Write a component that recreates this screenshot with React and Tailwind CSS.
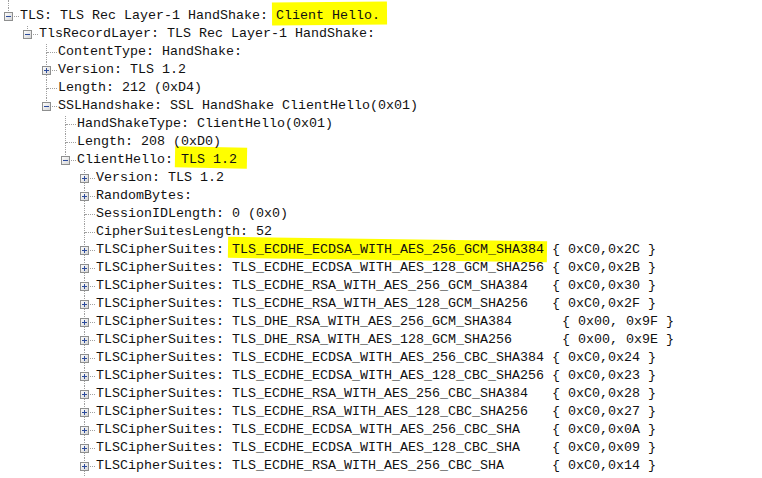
import React from "react";

const suites = [
  ["TLS_ECDHE_ECDSA_WITH_AES_256_GCM_SHA384", "{ 0xC0,0x2C }", true],
  ["TLS_ECDHE_ECDSA_WITH_AES_128_GCM_SHA256", "{ 0xC0,0x2B }"],
  ["TLS_ECDHE_RSA_WITH_AES_256_GCM_SHA384", "{ 0xC0,0x30 }"],
  ["TLS_ECDHE_RSA_WITH_AES_128_GCM_SHA256", "{ 0xC0,0x2F }"],
  ["TLS_DHE_RSA_WITH_AES_256_GCM_SHA384", "{ 0x00, 0x9F }", false, true],
  ["TLS_DHE_RSA_WITH_AES_128_GCM_SHA256", "{ 0x00, 0x9E }", false, true],
  ["TLS_ECDHE_ECDSA_WITH_AES_256_CBC_SHA384", "{ 0xC0,0x24 }"],
  ["TLS_ECDHE_ECDSA_WITH_AES_128_CBC_SHA256", "{ 0xC0,0x23 }"],
  ["TLS_ECDHE_RSA_WITH_AES_256_CBC_SHA384", "{ 0xC0,0x28 }"],
  ["TLS_ECDHE_RSA_WITH_AES_128_CBC_SHA256", "{ 0xC0,0x27 }"],
  ["TLS_ECDHE_ECDSA_WITH_AES_256_CBC_SHA", "{ 0xC0,0x0A }"],
  ["TLS_ECDHE_ECDSA_WITH_AES_128_CBC_SHA", "{ 0xC0,0x09 }"],
  ["TLS_ECDHE_RSA_WITH_AES_256_CBC_SHA", "{ 0xC0,0x14 }"],
];

const Expander = ({ open }) => (
  <svg width="9" height="9" viewBox="0 0 9 9" className="absolute left-[4px] top-[4px]">
    <defs>
      <linearGradient id={open ? "gm" : "gp"} x1="0" y1="0" x2="1" y2="1">
        <stop offset="0" stopColor="#ffffff" />
        <stop offset="1" stopColor="#d4d4d4" />
      </linearGradient>
    </defs>
    <rect x="0.5" y="0.5" width="8" height="8" fill={`url(#${open ? "gm" : "gp"})`} stroke="#8e8f8f" />
    <line x1="2" y1="4.5" x2="7" y2="4.5" stroke="#2c4b9c" />
    {!open && <line x1="4.5" y1="2" x2="4.5" y2="7" stroke="#2c4b9c" />}
  </svg>
);

// marker-pen highlight behind a bit of text
const Mark = ({ children, box }) => (
  <span className="relative">
    <span className={`absolute bg-[#ffff00] -z-10 ${box}`} />
    {children}
  </span>
);

const Row = ({ level, exp, next, children }) => (
  <div className="flex items-start h-[18px]">
    <div style={{ width: level * 19 }} className="shrink-0" />
    <div className="relative w-[19px] h-[18px] shrink-0">
      <div className="absolute left-[8px] top-0 h-[9px] border-l border-dotted border-[#a0a0a0]" />
      {next && <div className="absolute left-[8px] top-[9px] bottom-0 border-l border-dotted border-[#a0a0a0]" />}
      <div className="absolute left-[9px] top-[8px] w-[10px] border-t border-dotted border-[#a0a0a0]" />
      {exp && <Expander open={exp === "minus"} />}
    </div>
    <div className="ml-[1px] leading-[16px] whitespace-pre">{children}</div>
  </div>
);

export default function App() {
  return (
    <div className="w-[762px] h-[478px] overflow-hidden bg-white isolate text-[#111] font-['Liberation_Mono','Courier_New',monospace] text-[13.33px]">
      <div className="relative h-[8px]">
        <div className="absolute left-[8px] top-0 bottom-0 border-l border-dotted border-[#a0a0a0]" />
      </div>
      <Row level={0} exp="minus">
        TLS: TLS Rec Layer-1 HandShake:{" "}
        <Mark box="-left-[4px] -right-[7px] -top-[6px] -bottom-[2px] -rotate-[0.5deg]">Client Hello.</Mark>
      </Row>
      <Row level={1} exp="minus">TlsRecordLayer: TLS Rec Layer-1 HandShake:</Row>
      <Row level={2} next>ContentType: HandShake:</Row>
      <Row level={2} exp="plus" next>Version: TLS 1.2</Row>
      <Row level={2} next>Length: 212 (0xD4)</Row>
      <Row level={2} exp="minus">SSLHandshake: SSL HandShake ClientHello(0x01)</Row>
      <Row level={3} next>HandShakeType: ClientHello(0x01)</Row>
      <Row level={3} next>Length: 208 (0xD0)</Row>
      <Row level={3} exp="minus">
        ClientHello:{" "}
        <Mark box="-left-[6px] -right-[10px] -top-[5px] -bottom-[1px] rotate-[1deg]">TLS 1.2</Mark>
      </Row>
      <Row level={4} exp="plus" next>Version: TLS 1.2</Row>
      <Row level={4} exp="plus" next>RandomBytes:</Row>
      <Row level={4} next>SessionIDLength: 0 (0x0)</Row>
      <Row level={4} next>CipherSuitesLength: 52</Row>
      {suites.map(([name, code, hl, dhe]) => (
        <Row key={name} level={4} exp="plus" next>
          TLSCipherSuites:{" "}
          <span className={`inline-block ${dhe ? "w-[330px]" : "w-[320px]"}`}>
            {hl ? (
              <Mark box="-left-[4px] -right-[3px] -top-[3px] -bottom-[3px] rotate-[0.8deg]">{name}</Mark>
            ) : (
              name
            )}
          </span>
          {code}
        </Row>
      ))}
    </div>
  );
}
